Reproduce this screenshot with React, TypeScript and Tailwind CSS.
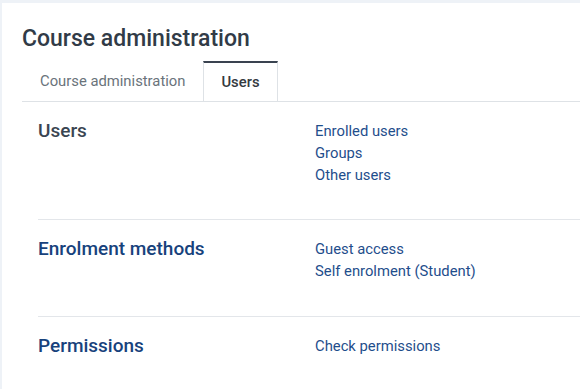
import React from 'react';

interface Section {
  title: string;
  isLink: boolean;
  links: string[];
}

const sections: Section[] = [
  { title: 'Users', isLink: false, links: ['Enrolled users', 'Groups', 'Other users'] },
  { title: 'Enrolment methods', isLink: true, links: ['Guest access', 'Self enrolment (Student)'] },
  { title: 'Permissions', isLink: true, links: ['Check permissions'] },
];

export default function App() {
  return (
    <div className="min-h-screen bg-[#eef2f7] pt-[3px] pl-[2px] font-['Roboto',sans-serif]">
      <div className="bg-white min-h-[386px] pl-5 pt-[23px]">
        <h2 className="text-[23px] leading-[26px] font-medium text-[#313b47]">Course administration</h2>

        <div className="mt-[9px] flex border-b border-[#dee2e6]">
          <div className="h-[40px] px-[18px] flex items-center text-[14.8px] text-[#6a737b]">
            Course administration
          </div>
          <div className="h-[40px] -mb-px px-[17px] flex items-center bg-white border-t-2 border-t-[#3a4350] border-x border-x-[#dee2e6] text-[14.8px] font-medium text-[#343a40]">
            Users
          </div>
        </div>

        <div className="pl-4">
          {sections.map((s, i) => (
            <div
              key={s.title}
              className={`grid grid-cols-[277px_1fr] pt-[18px] ${i === 0 ? 'pb-[33px]' : 'pb-[34px]'} ${
                i > 0 ? 'border-t border-[#e3e6ea]' : ''
              }`}
            >
              <h3
                className={`text-[19px] leading-[22px] font-medium ${
                  s.isLink ? 'text-[#17427c]' : 'text-[#3a4552]'
                }`}
              >
                {s.title}
              </h3>
              <ul>
                {s.links.map(l => (
                  <li key={l} className="text-[14.8px] leading-[22px]">
                    <a href="#" className="text-[#1f4e8c]">
                      {l}
                    </a>
                  </li>
                ))}
              </ul>
            </div>
          ))}
        </div>
      </div>
    </div>
  );
}
